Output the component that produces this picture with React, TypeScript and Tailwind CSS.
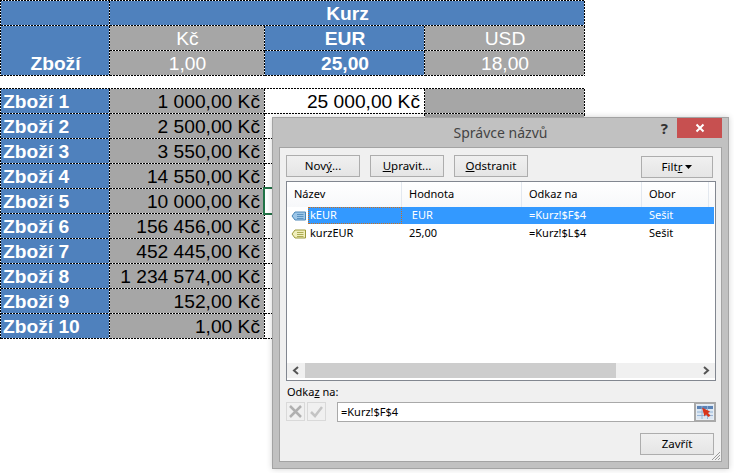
const dlgFont = { fontFamily: '"Noto Sans", sans-serif' };

const rows = [
  ["Zboží 1", "1 000,00 Kč"],
  ["Zboží 2", "2 500,00 Kč"],
  ["Zboží 3", "3 550,00 Kč"],
  ["Zboží 4", "14 550,00 Kč"],
  ["Zboží 5", "10 000,00 Kč"],
  ["Zboží 6", "156 456,00 Kč"],
  ["Zboží 7", "452 445,00 Kč"],
  ["Zboží 8", "1 234 574,00 Kč"],
  ["Zboží 9", "152,00 Kč"],
  ["Zboží 10", "1,00 Kč"],
];

const cols = "grid grid-cols-[109px_155px_160px_160px] w-[585px] relative pt-px pl-px before:absolute before:inset-x-0 before:top-0 before:h-px before:bg-[repeating-linear-gradient(90deg,#000,#000_2px,#fff_2px,#fff_3px)] after:absolute after:inset-y-0 after:left-0 after:w-px after:bg-[repeating-linear-gradient(180deg,#000,#000_2px,#fff_2px,#fff_3px)]";
const edge = "relative after:absolute after:inset-x-0 after:bottom-0 after:h-px after:bg-[repeating-linear-gradient(90deg,#000,#000_2px,#fff_2px,#fff_3px)] before:absolute before:inset-y-0 before:right-0 before:w-px before:bg-[repeating-linear-gradient(180deg,#000,#000_2px,#fff_2px,#fff_3px)]";
const bold = "text-white font-bold text-[19.2px]";

function Tag({ fill, stroke }: { fill: string; stroke: string }) {
  return (
    <svg width="16" height="12" viewBox="0 0 16 12" className="shrink-0">
      <path d="M1 6 L4 2 H14.5 V10 H4 Z" fill={fill} stroke={stroke} strokeWidth="1" />
      <path d="M6 4.5H12.5M6 6.5H12.5M6 8.5H12.5" stroke={stroke} strokeWidth="0.8" />
    </svg>
  );
}

function Btn({ children, className = "w-[74px]" }: { children: React.ReactNode; className?: string }) {
  return (
    <div className={`h-[22px] flex items-center justify-center border border-[#adadad] bg-gradient-to-b from-[#f0f0f0] to-[#e5e5e5] text-[11.5px] text-black ${className}`}>
      {children}
    </div>
  );
}

const listCols = "grid grid-cols-[115px_120px_120px_67px_1fr]";

export default function App() {
  return (
    <div className="relative w-[734px] h-[473px] overflow-hidden bg-white" style={{ fontFamily: '"Liberation Sans", Arial, sans-serif' }}>
      <div>
        <div className={`${cols} text-[19.2px] leading-[26px]`}>
          <div className={`h-[25px] bg-[#4f81bd] ${edge}`} />
          <div className={`col-span-3 h-[25px] bg-[#4f81bd] text-center ${bold} ${edge}`}>Kurz</div>

          <div className={`row-span-2 h-[50px] bg-[#4f81bd] flex items-end justify-center leading-[22px] pb-px ${bold} ${edge}`}>Zboží</div>
          <div className={`h-[25px] bg-[#a6a6a6] text-white text-center ${edge}`}>Kč</div>
          <div className={`h-[25px] bg-[#4f81bd] text-center ${bold} ${edge}`}>EUR</div>
          <div className={`h-[25px] bg-[#a6a6a6] text-white text-center ${edge}`}>USD</div>
          <div className={`h-[25px] bg-[#a6a6a6] text-white text-center ${edge}`}>1,00</div>
          <div className={`h-[25px] bg-[#4f81bd] text-center ${bold} ${edge}`}>25,00</div>
          <div className={`h-[25px] bg-[#a6a6a6] text-white text-center ${edge}`}>18,00</div>
        </div>

        <div className={`${cols} mt-[12px] text-[19.2px] leading-[26px]`}>
          {rows.map(([name, value], i) => (
            <div key={name} className="contents">
              <div className={`h-[25px] bg-[#4f81bd] pl-[2px] ${bold} ${edge}`}>{name}</div>
              <div className={`h-[25px] bg-[#a6a6a6] text-black text-right pr-[5px] ${edge}`}>{value}</div>
              <div className={`h-[25px] bg-white text-black text-right pr-[5px] ${edge}`}>
                {i === 0 ? "25 000,00 Kč" : ""}
                {i === 4 && <div className="absolute z-10 -left-[2px] -top-[2px] w-[162px] h-[28px] border-2 border-[#217346]" />}
              </div>
              <div className={`h-[25px] bg-[#a6a6a6] ${edge}`} />
            </div>
          ))}
        </div>
      </div>

      <div className="absolute z-20 left-[272px] top-[117px] w-[457px] h-[352px] bg-[#c1c1c1] border border-[#a3a3a3] flex flex-col shadow-[0_0_6px_rgba(0,0,0,0.18)]" style={dlgFont}>
        <div className="relative h-[29px] shrink-0 flex items-center justify-center text-[14px] text-[#444]">
          Správce názvů
          <div className="absolute right-[60px] -top-[1px] text-[15px] font-bold text-[#333]">?</div>
          <div className="absolute right-[6px] top-0 w-[45px] h-[20px] bg-[#c75050] flex items-center justify-center">
            <svg width="10" height="10" viewBox="0 0 10 10"><path d="M1.5 1.5L8.5 8.5M8.5 1.5L1.5 8.5" stroke="#fff" strokeWidth="2" /></svg>
          </div>
        </div>

        <div className="mx-[6px] h-[315px] bg-[#f0f0f0] border border-[#a3a3a3] px-[6px] pt-[7px] flex flex-col text-black">
          <div className="flex gap-[10px] h-[22px] shrink-0">
            <Btn>Nov<span className="underline">ý</span>...</Btn>
            <Btn><span className="underline">U</span>pravit...</Btn>
            <Btn><span className="underline">O</span>dstranit</Btn>
            <Btn className="w-[72px] ml-auto mr-[2px] gap-[3px] mt-px">
              <span>Filt<span className="underline">r</span></span>
              <svg width="7" height="4" viewBox="0 0 7 4"><path d="M0 0H7L3.5 4Z" fill="#000" /></svg>
            </Btn>
          </div>

          <div className="mt-[4px] w-[430px] h-[200px] shrink-0 bg-white border border-[#828790] flex flex-col text-[11px]">
            <div className={`${listCols} h-[25px] shrink-0 bg-gradient-to-b from-white to-[#f7f8fa]`}>
              {["Název", "Hodnota", "Odkaz na", "Obor", ""].map((h, i) => (
                <div key={i} className={`pl-[7px] flex items-center ${i < 4 ? "border-r border-[#e3e8ef]" : ""}`}>{h}</div>
              ))}
            </div>
            <div className={`${listCols} h-[17px] shrink-0 items-center`}>
              <div className="flex items-center h-full pl-[4px] gap-[1px]">
                <Tag fill="#9cc6e8" stroke="#4a86b8" />
                <div className="flex-1 h-full bg-[#3399ff] text-white pl-[2px] flex items-center outline-1 -outline-offset-1 outline-dotted outline-[#c9701f]">kEUR</div>
              </div>
              <div className="h-full bg-[#3399ff] text-white pl-[7px] flex items-center whitespace-pre"> EUR</div>
              <div className="h-full bg-[#3399ff] text-white pl-[7px] flex items-center">=Kurz!$F$4</div>
              <div className="h-full bg-[#3399ff] text-white pl-[7px] flex items-center">Sešit</div>
              <div className="h-full bg-[#3399ff] mr-[1px]" />
            </div>
            <div className={`${listCols} mt-px h-[17px] shrink-0 items-center`}>
              <div className="flex items-center h-full pl-[4px] gap-[1px]">
                <Tag fill="#f0eebc" stroke="#9c9a3a" />
                <div className="pl-[2px]">kurzEUR</div>
              </div>
              <div className="pl-[7px]">25,00</div>
              <div className="pl-[7px]">=Kurz!$L$4</div>
              <div className="pl-[7px]">Sešit</div>
            </div>
            <div className="flex-1" />
            <div className="h-[15px] shrink-0 mb-[2px] flex bg-[#f0f0f0]">
              <div className="w-[18px] flex items-center justify-center">
                <svg width="8" height="9" viewBox="0 0 8 9"><path d="M6 1L2 4.5L6 8" fill="none" stroke="#555" strokeWidth="2" /></svg>
              </div>
              <div className="w-[311px] bg-[#cdcdcd]" />
              <div className="flex-1" />
              <div className="w-[18px] flex items-center justify-center">
                <svg width="8" height="9" viewBox="0 0 8 9"><path d="M2 1L6 4.5L2 8" fill="none" stroke="#555" strokeWidth="2" /></svg>
              </div>
            </div>
          </div>

          <div className="mt-[2px] h-[18px] flex items-center text-[11px] pl-px">Odka<span className="underline">z</span>&nbsp;na:</div>
          <div className="mt-[1px] flex items-start h-[20px] shrink-0 w-[430px]">
            <div className="w-[19px] h-[19px] border border-[#d9d9d9] flex items-center justify-center">
              <svg width="15" height="15" viewBox="0 0 15 15"><path d="M2 2L13 13M13 2L2 13" stroke="#b0b0b0" strokeWidth="2.5" /></svg>
            </div>
            <div className="ml-[2px] w-[19px] h-[19px] border border-[#d9d9d9] flex items-center justify-center">
              <svg width="15" height="15" viewBox="0 0 15 15"><path d="M2 8L6 12L13 3" fill="none" stroke="#c4c4c4" strokeWidth="2.5" /></svg>
            </div>
            <div className="ml-[11px] flex-1 h-[20px] bg-white border border-[#a9a9a9] border-r-0 pl-[3px] flex items-center text-[11px] text-black">=Kurz!$F$4</div>
            <div className="w-[22px] h-[20px] border-2 border-[#a9a9a9] bg-[#e8eef5] flex items-center justify-center">
              <svg width="16" height="14" viewBox="0 0 16 14">
                <rect x="0" y="0" width="16" height="14" fill="#dbe7f3" />
                <rect x="0" y="1" width="16" height="3" fill="#5b82b5" />
                <path d="M0 7H16M0 10.5H16M5 1V14M10.5 1V14" stroke="#8fb0d6" strokeWidth="0.9" />
                <path d="M5 2.5L13 6.5L11 8L13.5 10.5L11.5 12L9 9.5L7.5 11.5Z" fill="#d9361c" />
              </svg>
            </div>
          </div>

          <div className="flex justify-end mt-[11px] mr-[1px]">
            <Btn>Zavřít</Btn>
          </div>
          <div className="relative flex-1">
            <svg width="10" height="10" viewBox="0 0 10 10" className="absolute -right-[6px] bottom-0">
              <path d="M9 1L1 9M9 4L4 9M9 7L7 9" stroke="#9a9a9a" strokeWidth="1" />
            </svg>
          </div>
        </div>
      </div>
    </div>
  );
}
